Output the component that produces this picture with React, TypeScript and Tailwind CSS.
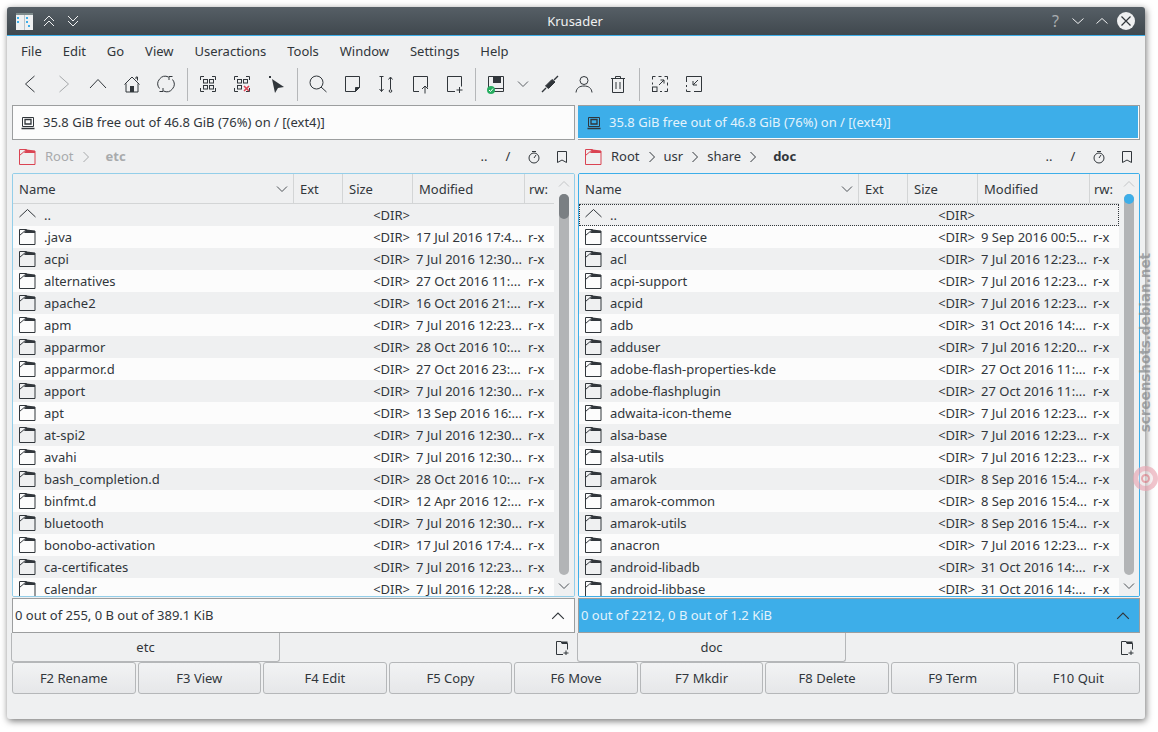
import type { ReactNode } from "react";

const I = ({ children, className = "" }: { children: ReactNode; className?: string }) => (
  <svg width={22} height={22} viewBox="0 0 22 22" fill="none" stroke="currentColor" className={"shrink-0 " + className}>
    {children}
  </svg>
);

const FolderIcon = ({ color = "#31363b" }: { color?: string }) => (
  <svg width="17" height="16" viewBox="0 0 17 16" fill="none" stroke={color} className="shrink-0">
    <path d="M.5 15.500V.5h7L.5 6.500M.5 15.500h15.500V2" />
    <path d="M7.500.5l8.500 1V4H5z" fill={color} stroke="none" />
  </svg>
);

const Chevron = ({ dir = "down", className = "", size = 12 }: { dir?: "down" | "up" | "right"; className?: string; size?: number }) => {
  const d = dir === "down" ? "M1 3.5l5 5 5-5" : dir === "up" ? "M1 8.5l5-5 5 5" : "M3.5 1l5 5-5 5";
  return (
    <svg width={size} height={size} viewBox="0 0 12 12" fill="none" stroke="currentColor" className={"shrink-0 " + className}>
      <path d={d} />
    </svg>
  );
};

const Squares = () => (
  <>
    <path d="M3.500 7V3.500H7M15 3.500h3.500V7M3.500 15v3.500H7M15 18.500h3.500V15" />
    <rect x="6.500" y="6.500" width="4" height="3.500" />
    <rect x="12.500" y="6.500" width="4" height="3.500" />
    <rect x="6.500" y="12.500" width="4" height="3.500" />
  </>
);

const Page = () => <path d="M4.500 18.500v-15h14v11l-4 4z" />;

const ToolBtn = ({ children, className = "" }: { children: ReactNode; className?: string }) => (
  <div className={"flex h-[32px] w-[34px] shrink-0 items-center justify-center text-[#31363b] " + className}>{children}</div>
);

const Sep = () => <div className="mx-[3.5px] h-[33px] w-px shrink-0 bg-[#b5b7b9]" />;

const Toolbar = () => (
  <div className="flex h-[36px] items-center pl-[6px]">
    <ToolBtn><I><path d="M15.500 3l-9 8 9 8" /></I></ToolBtn>
    <ToolBtn className="text-[#a5a8aa]"><I><path d="M6.500 3l9 8-9 8" /></I></ToolBtn>
    <ToolBtn><I><path d="M3 15l8-8.500 8 8.500" /></I></ToolBtn>
    <ToolBtn>
      <I>
        <path d="M3.500 11.500L11 4l7.500 7.500M5 10.500v8.500h12v-8.500M15 6V4h1.500v3.500" />
        <rect x="9" y="13" width="4" height="6" fill="currentColor" stroke="none" />
      </I>
    </ToolBtn>
    <ToolBtn>
      <I>
        <path d="M4.500 15.500A7.500 7.500 0 0 1 13.500 4" />
        <path d="M17.500 6.500A7.500 7.500 0 0 1 8.500 18" />
        <path d="M14 7V3.500h3.500M8 15v3.500H4.500" />
      </I>
    </ToolBtn>
    <Sep />
    <ToolBtn><I><Squares /><rect x="12.500" y="12.500" width="4" height="3.500" /></I></ToolBtn>
    <ToolBtn>
      <I>
        <Squares />
        <path d="M13 13l5 5M18 13l-5 5" stroke="#da4453" strokeWidth="1.600" />
      </I>
    </ToolBtn>
    <ToolBtn>
      <I>
        <path d="M7 6l12 8-6 1-3 5z" fill="currentColor" stroke="none" />
        <rect x="4" y="3" width="2" height="2" fill="currentColor" stroke="none" />
      </I>
    </ToolBtn>
    <Sep />
    <ToolBtn><I><circle cx="9.500" cy="9.500" r="6.500" /><path d="M14 14l5.500 5" /></I></ToolBtn>
    <ToolBtn><I><Page /><path d="M14.500 18.500v-4h4z" fill="currentColor" /></I></ToolBtn>
    <ToolBtn>
      <I>
        <path d="M4.500 3.500h4M6.500 3.500v15M4.500 16l2 2.500 2-2.500" />
        <path d="M15.500 4.500v11.500M13.500 6.500l2-2.500 2 2.500" />
        <circle cx="15.500" cy="18" r="1.300" />
      </I>
    </ToolBtn>
    <ToolBtn><I><path d="M10 18.500H4.500v-15h14v11" /><path d="M16 20.500v-7M13 16l3-3 3 3" /></I></ToolBtn>
    <ToolBtn><I><path d="M12 18.500H4.500v-15h14v10" /><path d="M16.500 14v6M13.500 17h6" /></I></ToolBtn>
    <Sep />
    <ToolBtn>
      <I>
        <path d="M3.500 14V3.500h15v15H8" />
        <rect x="8" y="4" width="8" height="6" fill="currentColor" stroke="none" />
        <path d="M9 15.500h9.500" />
        <circle cx="6" cy="17" r="4" fill="#27ae60" stroke="none" />
        <path d="M4 17l1.500 1.500L8 15.500" stroke="#fff" />
      </I>
    </ToolBtn>
    <div className="flex w-[20px] shrink-0 justify-center text-[#5b6065]"><Chevron /></div>
    <ToolBtn>
      <I>
        <path d="M3 19l4-4M15 7l4-4" strokeWidth="1.400" />
        <path d="M6.500 13l6.500-6.500 3 2.500-6.500 6.500z" fill="currentColor" />
      </I>
    </ToolBtn>
    <ToolBtn><I><circle cx="11" cy="7.500" r="4" /><path d="M3 19.500c.5-4.500 3.500-6.500 8-6.500s7.500 2 8 6.500" /></I></ToolBtn>
    <ToolBtn>
      <I>
        <path d="M4 5.500h14M8.500 5.500V3.500h5v2M5.500 5.500v14h11v-14M9 9v7M13 9v7" />
      </I>
    </ToolBtn>
    <Sep />
    <ToolBtn>
      <I>
        <path d="M3.500 6.500v-3h3M9.500 3.500h3M15.500 3.500h3v3M18.500 9.500v3M18.500 15.500v3h-3M11 18.500h2M3.500 9.500v2" />
        <rect x="3.500" y="14" width="4.500" height="4.500" />
        <path d="M10 12l5-5M11.500 7H15v3.500" />
      </I>
    </ToolBtn>
    <ToolBtn>
      <I>
        <path d="M3.500 3.500h15v15H11" />
        <path d="M3.500 3.500V9M3.500 12v2M3.500 16.500v2h4" />
        <path d="M15 7l-5 5M10 8v4h4" />
      </I>
    </ToolBtn>
  </div>
);

type Row = [string, string];

const leftRows: Row[] = [
  ["..", ""],
  [".java", "17 Jul 2016 17:4..."],
  ["acpi", "7 Jul 2016 12:30..."],
  ["alternatives", "27 Oct 2016 11:..."],
  ["apache2", "16 Oct 2016 21:..."],
  ["apm", "7 Jul 2016 12:23..."],
  ["apparmor", "28 Oct 2016 10:..."],
  ["apparmor.d", "27 Oct 2016 23:..."],
  ["apport", "7 Jul 2016 12:30..."],
  ["apt", "13 Sep 2016 16:..."],
  ["at-spi2", "7 Jul 2016 12:30..."],
  ["avahi", "7 Jul 2016 12:30..."],
  ["bash_completion.d", "28 Oct 2016 10:..."],
  ["binfmt.d", "12 Apr 2016 12:..."],
  ["bluetooth", "7 Jul 2016 12:30..."],
  ["bonobo-activation", "17 Jul 2016 17:4..."],
  ["ca-certificates", "7 Jul 2016 12:23..."],
  ["calendar", "7 Jul 2016 12:28..."],
];

const rightRows: Row[] = [
  ["..", ""],
  ["accountsservice", "9 Sep 2016 00:5..."],
  ["acl", "7 Jul 2016 12:23..."],
  ["acpi-support", "7 Jul 2016 12:23..."],
  ["acpid", "7 Jul 2016 12:23..."],
  ["adb", "31 Oct 2016 14:..."],
  ["adduser", "7 Jul 2016 12:20..."],
  ["adobe-flash-properties-kde", "27 Oct 2016 11:..."],
  ["adobe-flashplugin", "27 Oct 2016 11:..."],
  ["adwaita-icon-theme", "7 Jul 2016 12:23..."],
  ["alsa-base", "7 Jul 2016 12:23..."],
  ["alsa-utils", "7 Jul 2016 12:23..."],
  ["amarok", "8 Sep 2016 15:4..."],
  ["amarok-common", "8 Sep 2016 15:4..."],
  ["amarok-utils", "8 Sep 2016 15:4..."],
  ["anacron", "7 Jul 2016 12:23..."],
  ["android-libadb", "31 Oct 2016 14:..."],
  ["android-libbase", "31 Oct 2016 14:..."],
];

const HeaderCell = ({ children, className = "" }: { children: ReactNode; className?: string }) => (
  <div className={"flex items-center overflow-hidden border-r border-[#d3d5d6] pl-[6px] pt-[2px] " + className}>{children}</div>
);

const FileRow = ({ row, i, focused, cols }: { row: Row; i: number; focused: boolean; cols: string }) => {
  const up = row[0] === "..";
  return (
    <div
      className={
        "relative grid h-[22px] shrink-0 items-center whitespace-nowrap " +
        cols +
        " " +
        (i % 2 === 1 ? "bg-[#fcfcfc]" : "bg-[#eff0f1]")
      }
    >
      {up && focused && <div className="absolute inset-0 border border-dotted border-[#31363b]" />}
      <div className="flex items-center gap-[8px] pl-[6px]">
        {up ? (
          <svg width="17" height="16" viewBox="0 0 17 16" fill="none" stroke="#31363b" className="shrink-0">
            <path d="M.5 10L8.500 2.500 16.500 10" />
          </svg>
        ) : (
          <FolderIcon />
        )}
        <span>{row[0]}</span>
      </div>
      <div />
      <div className="pr-[3px] text-right">&lt;DIR&gt;</div>
      <div className="pl-[3px]">{row[1]}</div>
      <div className="pl-[3px]">{row[1] ? "r-x" : ""}</div>
    </div>
  );
};

const Scroll = ({ active }: { active: boolean }) => (
  <div className="flex min-w-0 flex-1 flex-col items-center bg-[#eff0f1]">
    <Chevron dir="up" className="mt-[4px] text-[#c4c6c8]" />
    <div className="relative mt-[4px] h-[381px] w-[10px] rounded-[5px] bg-[#b2b4b6]">
      {active ? (
        <div className="h-[10px] w-[10px] rounded-full bg-[#3daee9]" />
      ) : (
        <div className="h-[25px] w-[10px] rounded-[5px] bg-[#7a7f83]" />
      )}
    </div>
    <Chevron className="mt-[5px] text-[#4d5257]" />
  </div>
);

const Pane = ({
  active,
  crumbs,
  current,
  rows,
  status,
  tab,
  cols,
  tableWidth,
}: {
  active: boolean;
  crumbs: string[];
  current: string;
  rows: Row[];
  status: string;
  tab: string;
  cols: string;
  tableWidth: string;
}) => (
  <div className="flex min-w-0 flex-col">
    <div
      className={
        "flex h-[35px] items-center gap-[8px] border border-[#9c9e9f] " +
        (active
          ? "border-l-0 bg-[#3daee9] pl-[9px] text-[#e3f3fc] shadow-[inset_-1px_-1px_0_#fcfcfc]"
          : "bg-[#fcfcfc] pl-[8px]")
      }
    >
      <svg width="14" height="14" viewBox="0 0 14 14" fill="none" stroke="#31363b" className="shrink-0">
        <path d="M1.500 1.500h11v9h-11z" />
        <path d="M4 3.500h6v4.500H4zM.5 12.500h13" strokeWidth="1.300" />
      </svg>
      <span>35.8 GiB free out of 46.8 GiB (76%) on / [(ext4)]</span>
    </div>

    <div className="flex h-[33px] items-center pl-[7px]">
      <FolderIcon color="#da4453" />
      <div className={"ml-[9px] flex items-center " + (active ? "" : "text-[#a8aaac]")}>
        {crumbs.map((c) => (
          <div key={c} className="flex items-center">
            <span>{c}</span>
            <Chevron dir="right" className="mx-[6px]" />
          </div>
        ))}
        <span className="ml-[8px] font-bold">{current}</span>
      </div>
      <div className="ml-auto flex items-center">
        <span className="w-[24px] text-center">..</span>
        <span className="w-[24px] text-center">/</span>
        <div className="flex w-[28px] justify-center">
          <svg width="14" height="14" viewBox="0 0 14 14" fill="none" stroke="#31363b">
            <circle cx="7" cy="8" r="5" />
            <path d="M7 8l2-3M5 1.500h4" />
          </svg>
        </div>
        <div className="flex w-[27px] justify-center">
          <svg width="14" height="14" viewBox="0 0 14 14" fill="none" stroke="#31363b">
            <path d="M2.500 1.500h9v11l-4.500-2.500-4.500 2.500z" />
          </svg>
        </div>
      </div>
    </div>

    <div
      className={
        "flex h-[424px] overflow-hidden rounded-[2px] border " + (active ? "border-[#3daee9]" : "border-[#93cee9]")
      }
    >
      <div className={"flex shrink-0 flex-col " + tableWidth}>
        <div className={"grid h-[30px] shrink-0 border-b border-[#d3d5d6] bg-[#eff0f1] " + cols}>
          <HeaderCell className="justify-between pr-[5px]">
            Name
            <Chevron className="-mt-[2px] text-[#4d5257]" />
          </HeaderCell>
          <HeaderCell>Ext</HeaderCell>
          <HeaderCell>Size</HeaderCell>
          <HeaderCell>Modified</HeaderCell>
          <div className="flex items-center overflow-hidden pl-[4px] pt-[2px]">rw:</div>
        </div>
        <div className="flex flex-1 flex-col overflow-hidden">
          {rows.map((r, i) => (
            <FileRow key={r[0]} row={r} i={i} focused={active} cols={cols} />
          ))}
        </div>
      </div>
      <Scroll active={active} />
    </div>

    <div
      className={
        "mt-px flex h-[35px] items-center justify-between border border-[#9c9e9f] pl-[2px] pr-[9px] " +
        (active ? "bg-[#3daee9] text-[#e3f3fc]" : "bg-[#fcfcfc]")
      }
    >
      <span>{status}</span>
      <Chevron dir="up" size={14} className="text-[#31363b]" />
    </div>

    <div className="flex h-[29px] items-stretch">
      <div className="-ml-px flex w-[269px] items-center justify-center rounded-b-[3px] border border-t-0 border-[#b5b7b9] bg-[#eff0f1]">
        {tab}
      </div>
      <div className="ml-auto flex items-center pr-[6px]">
        <svg width="13" height="14" viewBox="0 0 13 14" fill="none" stroke="#31363b">
          <path d="M7 13.500H.5V.5h4.500l1 2h5.500v6" />
          <path d="M5 .5h6.500v2.500H6z" fill="#31363b" stroke="none" />
          <path d="M10 9.500v4.500M7.500 12h5" />
        </svg>
      </div>
    </div>
  </div>
);

const FnBtn = ({ label }: { label: string }) => (
  <div className="flex h-[32px] flex-1 items-center justify-center rounded-[3px] border border-[#b5b7b9] bg-gradient-to-b from-[#f2f3f4] to-[#e6e7e9]">
    {label}
  </div>
);

const keys = ["F2 Rename", "F3 View", "F4 Edit", "F5 Copy", "F6 Move", "F7 Mkdir", "F8 Delete", "F9 Term", "F10 Quit"];
const menus = ["File", "Edit", "Go", "View", "Useractions", "Tools", "Window", "Settings", "Help"];

const App = () => (
  <div className="relative h-[732px] w-[1158px] overflow-hidden bg-white p-[7px] font-['Noto_Sans',sans-serif] text-[13px] leading-none text-[#31363b]">
    <div className="flex h-[712px] w-[1138px] flex-col rounded-[3px] bg-[#eff0f1] shadow-[1px_2px_7px_rgba(0,0,0,0.55)]">
      <div className="relative flex h-[29px] shrink-0 items-center rounded-t-[3px] border-b border-[#3daee9] bg-gradient-to-b from-[#565f66] to-[#40484e] pl-[9px] pr-[10px] text-[#eff0f1]">
        <svg width="17" height="17" viewBox="0 0 17 17" className="shrink-0">
          <rect width="17" height="17" fill="#eff0f1" />
          <rect width="17" height="2" fill="#7f8c8d" />
          <rect x="8" y="2" width="1" height="15" fill="#bdc3c7" />
          <path d="M1 4h2v2H1zM1 8h2v2H1zM10 4h2v2h-2zM10 8h2v2h-2zM12 12h2v2h-2z" fill="#3daee9" />
        </svg>
        <svg width="14" height="14" viewBox="0 0 14 14" fill="none" stroke="currentColor" className="ml-[9px]">
          <path d="M2 7l5-5 5 5M2 12l5-5 5 5" />
        </svg>
        <svg width="14" height="14" viewBox="0 0 14 14" fill="none" stroke="currentColor" className="ml-[10px]">
          <path d="M2 2l5 5 5-5M2 7l5 5 5-5" />
        </svg>
        <span className="flex-1 pl-[18px] text-center">Krusader</span>
        <span className="text-[16px] text-[#a9adb0]">?</span>
        <svg width="14" height="14" viewBox="0 0 14 14" fill="none" stroke="currentColor" className="ml-[12px]">
          <path d="M1.500 4.500l5.500 5 5.500-5" />
        </svg>
        <svg width="14" height="14" viewBox="0 0 14 14" fill="none" stroke="currentColor" className="ml-[10px]">
          <path d="M1.500 9.500l5.500-5 5.500 5" />
        </svg>
        <div className="ml-[8px] flex h-[18px] w-[18px] items-center justify-center rounded-full bg-[#eff0f1] text-[#31363b]">
          <svg width="12" height="12" viewBox="0 0 12 12" fill="none" stroke="currentColor" strokeWidth="1.200">
            <path d="M1.500 1.500l9 9M10.500 1.500l-9 9" />
          </svg>
        </div>
      </div>

      <div className="flex h-[30px] shrink-0 items-center gap-[20.9px] pl-[14px]">
        {menus.map((m) => (
          <span key={m}>{m}</span>
        ))}
      </div>

      <Toolbar />

      <div className="mt-[3px] grid grid-cols-[563px_562px] gap-x-[3px] pl-[5px]">
        <Pane
          active={false}
          crumbs={["Root"]}
          current="etc"
          rows={leftRows}
          status="0 out of 255, 0 B out of 389.1 KiB"
          tab="etc"
          cols="grid-cols-[281px_49px_70px_112px_29px]"
          tableWidth="w-[541px]"
        />
        <Pane
          active
          crumbs={["Root", "usr", "share"]}
          current="doc"
          rows={rightRows}
          status="0 out of 2212, 0 B out of 1.2 KiB"
          tab="doc"
          cols="grid-cols-[280px_49px_70px_112px_29px]"
          tableWidth="w-[540px]"
        />
      </div>

      <div className="flex gap-[2px] px-[5px]">
        {keys.map((k) => (
          <FnBtn key={k} label={k} />
        ))}
      </div>
    </div>

    <span className="absolute left-[1139px] top-[253px] rotate-180 font-['DejaVu_Sans',sans-serif] text-[13.500px] font-bold text-[#8d9093]/80 [writing-mode:vertical-rl]">
      screenshots.debian.net
    </span>
    <div className="absolute left-[1133px] top-[466px] flex h-[25px] w-[25px] items-center justify-center rounded-full border-[5px] border-[#e58a9c]/45 bg-[#f3e3e7]/40">
      <div className="h-[9px] w-[9px] rounded-full border-2 border-[#da4453]/40" />
    </div>
  </div>
);

export default App;
